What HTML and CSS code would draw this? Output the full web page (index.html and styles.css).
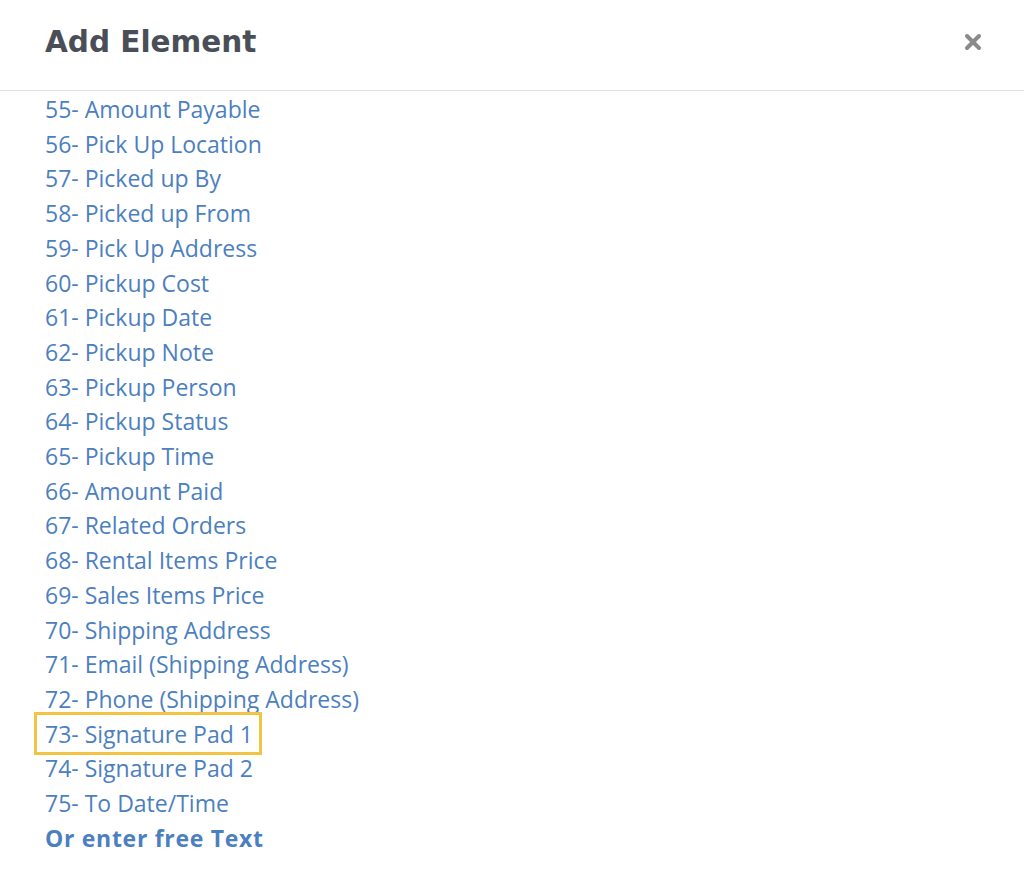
FILE: index.html
```html
<!DOCTYPE html>
<html lang="en">
<head>
    <meta charset="UTF-8">
    <meta name="viewport" content="width=device-width, initial-scale=1.0">
    <title>Add Element</title>
    <link rel="stylesheet" href="styles.css">
</head>
<body>
    <div class="modal">
        <div class="modal-header">
            <h2>Add Element</h2>
            <button class="close" aria-label="Close">
                <svg width="18" height="18" viewBox="0 0 18 18">
                    <path d="M3 3 L15 15 M15 3 L3 15" stroke="#8a8a8a" stroke-width="4" stroke-linecap="round"/>
                </svg>
            </button>
        </div>

        <!-- list of elements -->
        <ul class="element-list">
            <li><a href="#">55- Amount Payable</a></li>
            <li><a href="#">56- Pick Up Location</a></li>
            <li><a href="#">57- Picked up By</a></li>
            <li><a href="#">58- Picked up From</a></li>
            <li><a href="#">59- Pick Up Address</a></li>
            <li><a href="#">60- Pickup Cost</a></li>
            <li><a href="#">61- Pickup Date</a></li>
            <li><a href="#">62- Pickup Note</a></li>
            <li><a href="#">63- Pickup Person</a></li>
            <li><a href="#">64- Pickup Status</a></li>
            <li><a href="#">65- Pickup Time</a></li>
            <li><a href="#">66- Amount Paid</a></li>
            <li><a href="#">67- Related Orders</a></li>
            <li><a href="#">68- Rental Items Price</a></li>
            <li><a href="#">69- Sales Items Price</a></li>
            <li><a href="#">70- Shipping Address</a></li>
            <li><a href="#">71- Email (Shipping Address)</a></li>
            <li><a href="#">72- Phone (Shipping Address)</a></li>
            <li class="selected"><a href="#">73- Signature Pad 1</a></li>
            <li><a href="#">74- Signature Pad 2</a></li>
            <li><a href="#">75- To Date/Time</a></li>
            <li class="free-text"><a href="#">Or enter free Text</a></li>
        </ul>
    </div>
</body>
</html>
```

FILE: styles.css
```css
body {
    margin: 0;
    background-color: #fff;
    font-family: "Open Sans", Arial, sans-serif;
}

.modal {
    width: 1024px;
}

.modal-header {
    display: flex;
    justify-content: space-between;
    align-items: center;
    height: 84px;
    padding: 0 42px 6px 45px;
    border-bottom: 1px solid #dedfe4;
}

.modal-header h2 {
    margin: 0;
    font-family: "DejaVu Sans", "Open Sans", sans-serif;
    font-size: 29.5px;
    font-weight: 700;
    color: #4a4f57;
}

.close {
    background: none;
    border: none;
    padding: 0;
    cursor: pointer;
    display: flex;
}

.element-list {
    list-style: none;
    margin: 0;
    padding: 1px 0 0 45px;
}

.element-list li {
    font-size: 23px;
    line-height: 34.7px;
}

.element-list a {
    color: #4c7fbf;
    text-decoration: none;
}

/* current pick gets a yellow frame, drawn as outline so rows keep their pitch */
.element-list .selected a {
    outline: 3px solid #f3c343;
    padding: 3px 6px 2px 8px;
    margin-left: -8px;
    margin-right: -6px;
}

.element-list .free-text a {
    font-weight: 700;
    letter-spacing: 0.7px;
}
```
